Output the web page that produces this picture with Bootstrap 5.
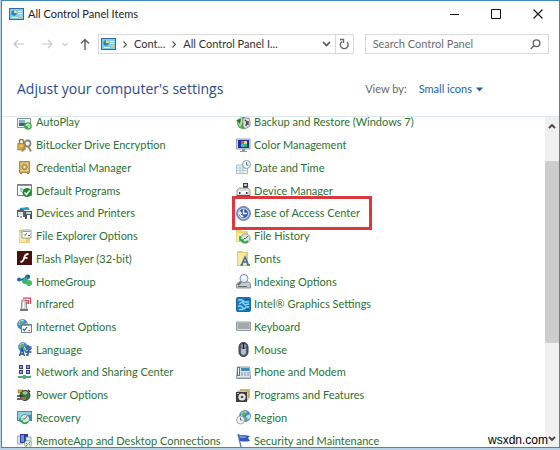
<!DOCTYPE html>
<html lang="en">
<head>
<meta charset="utf-8">
<meta name="viewport" content="width=device-width, initial-scale=1">
<title>All Control Panel Items</title>
<link href="https://cdn.jsdelivr.net/npm/bootstrap@5.3.0/dist/css/bootstrap.min.css" rel="stylesheet">
<style>
body{font-family:Lato,"Open Sans",sans-serif;font-size:11px;line-height:16px;color:#333;background:#b9d3e6}
svg{display:block;flex:none}
button{background:none;border:0;padding:0;color:inherit}
.desktop{height:100vh;padding:0 0 2px 1px}
.cp-window{border:1px solid #4389b5;background:#fff}
.title-bar{height:26px;padding:0 16px 0 7px;color:#222}
.caption-buttons{gap:32px;color:#111}
.nav-strip{height:20px;margin-top:7px;padding:0 10px 0 11px;color:#555}
.nav-arrows{width:85px;color:#c8c8c8}
.address{flex:1 1 0;border:1px solid #d9d9d9;color:#333;padding-left:2px}
.address .crumb-gap{margin:0 7px}
.address .split{border-left:1px solid #d9d9d9;width:18px}
.search{flex:none;width:34.4%;border:1px solid #d9d9d9;margin-left:11px;padding:0 7px}
.search input{font-size:11px;line-height:16px;color:#666}
.search input::placeholder{color:#6d6d6d;opacity:1}
.head{height:62px;padding:8px 76px 0 15px}
.head h1{font-family:"Open Sans","Noto Sans",sans-serif;font-size:14px;line-height:22px;color:#2b4b8c}
.view-label{color:#666}
.view-btn{color:#1f5fae;line-height:16px}
.content{border-top:1px solid #dbe8f2}
.items{margin:-6px 0 -5px;padding-left:15px}
.items ul{width:41.5%}
.items li{flex:1 1 0;min-height:0;display:flex;align-items:center}
.items a{display:flex;align-items:center;gap:4px;color:#2b7233;text-decoration:none;white-space:nowrap;position:relative}
.items ul+ul a{gap:3px}
.marked::after{content:"";position:absolute;inset:-9px -12px -9px -4px;border:3px solid #d93a40}
.scroll{width:14px;background:#f0f0f0;color:#444}
.thumb{flex:183 1 0;background:#cdcdcd}
.scroll button{height:17px}
.site-tag{position:absolute;right:12px;bottom:2px;font:12px/16px "Liberation Sans",Arial,sans-serif;color:#000}
</style>
<script src="https://cdn.jsdelivr.net/npm/bootstrap@5.3.0/dist/js/bootstrap.bundle.min.js"></script>
</head>
<body>
<svg width="0" height="0" class="position-absolute" aria-hidden="true"><defs>
<symbol id="panel" viewBox="0 0 15 12"><path fill="#2b6d9d" d="M0 0h15v12H0z"/><path fill="#83cdec" d="M1 1h13v10H1z"/><circle cx="5" cy="5" r="2.7" fill="#2687bd"/><path fill="#f7de79" d="M5 5V2.2A2.8 2.8 0 0 1 7.8 5z"/><path fill="#e8f8ff" d="M9 3h4v1H9zm0 2h4v1H9zM3 9h6v1H3z"/><path fill="#f1c74d" d="M10 7h3v2h-3z"/></symbol>
<symbol id="globe" viewBox="0 0 12 12"><circle cx="6" cy="6" r="5.5" fill="#418cc3" stroke="#3474a6" stroke-width=".6"/><path fill="#bde6f2" d="M2 3q3-3 6-1L5 5 2 7zM7 6l4-2v4L8 10z"/><path fill="#6cae58" d="M4 2l4 1-2 2-2 1-2-1zM6 7l3 1-2 3-2-2z"/></symbol>
</defs></svg>
<div class="desktop position-relative">
<main class="cp-window h-100 d-flex flex-column overflow-hidden">
<header class="title-bar d-flex align-items-center">
<svg width="15" height="12"><use href="#panel"/></svg><span class="ms-1 me-auto">All Control Panel Items</span>
<div class="caption-buttons d-flex align-items-center">
<button type="button" aria-label="Minimize"><svg width="9" height="9"><path d="M0 4.5h9" stroke="currentColor"/></svg></button>
<button type="button" aria-label="Maximize"><svg width="10" height="10"><path d="M.5.5h9v9h-9z" fill="none" stroke="currentColor"/></svg></button>
<button type="button" aria-label="Close"><svg width="10" height="10"><path d="M.5.5l9 9m0-9l-9 9" stroke="currentColor" stroke-width="1.1"/></svg></button>
</div>
</header>
<nav class="nav-strip d-flex">
<div class="nav-arrows d-flex align-items-center">
<button type="button" aria-label="Back"><svg width="12" height="10" fill="none" stroke="currentColor" stroke-width="1.2"><path d="M11 5H1m4-4L1 5l4 4"/></svg></button>
<button type="button" aria-label="Forward" class="ms-3"><svg width="12" height="10" fill="none" stroke="currentColor" stroke-width="1.2"><path d="M1 5h10M7 1l4 4-4 4"/></svg></button>
<button type="button" aria-label="Recent" class="ms-auto me-2"><svg width="6" height="5" fill="none" stroke="currentColor" stroke-width="1.2"><path d="M.5 1L3 3.500 5.500 1"/></svg></button>
<button type="button" aria-label="Up" class="ms-1 me-2"><svg width="10" height="12" fill="none" stroke="#666" stroke-width="1.5"><path d="M5 12V1.500M1 5.500l4-4 4 4"/></svg></button>
</div>
<div class="address d-flex align-items-center">
<svg width="15" height="12"><use href="#panel"/></svg>
<svg class="crumb-gap" width="4" height="7" fill="none" stroke="#555" stroke-width="1.2"><path d="M.5.5l3 3-3 3"/></svg>
<button type="button">Cont...</button>
<svg class="crumb-gap" width="4" height="7" fill="none" stroke="#555" stroke-width="1.2"><path d="M.5.5l3 3-3 3"/></svg>
<button type="button" class="text-nowrap">All Control Panel I...</button>
<button type="button" aria-label="Previous locations" class="ms-auto me-1"><svg width="9" height="6" fill="none" stroke="#555" stroke-width="1.7"><path d="M1 1l3.500 3.500L8 1"/></svg></button>
<button type="button" aria-label="Refresh" class="split h-100 d-flex align-items-center justify-content-center"><svg width="10" height="12" fill="none" stroke="#666" stroke-width="1.400"><path d="M3 3.500A3.900 3.900 0 1 0 8 4M1 1.500h3.500V5"/></svg></button>
</div>
<div class="search d-flex align-items-center">
<input type="text" class="border-0 p-0 flex-grow-1 w-100 bg-transparent" placeholder="Search Control Panel" aria-label="Search Control Panel">
<button type="button" aria-label="Search"><svg width="11" height="11" fill="none" stroke="#666" stroke-width="1.4"><circle cx="6.500" cy="4.200" r="3.300"/><path d="M4.200 6.500L.7 10"/></svg></button>
</div>
</nav>
<div class="head d-flex align-items-center">
<h1 class="m-0 me-auto text-nowrap fw-normal">Adjust your computer's settings</h1>
<span class="view-label me-2 pe-1 text-nowrap">View by:</span>
<button type="button" class="view-btn d-flex align-items-center text-nowrap">Small icons<svg class="ms-1" width="7" height="5"><path fill="#1f5fae" d="M0 .5h7L3.500 4.500z"/></svg></button>
</div>
<div class="content d-flex flex-grow-1 overflow-hidden">
<div class="items d-flex flex-grow-1">
<ul class="list-unstyled m-0 d-flex flex-column">
<li><a href="#"><svg width="15" height="15"><path fill="#eef2f1" stroke="#8b9793" d="M.5 3.500h13v9H.5z"/><path fill="#3a6679" d="M2 5h6v6H2z"/><path fill="#7fb7c6" d="M2 5h6v3H2z"/><circle cx="11" cy="11" r="3.800" fill="#39a84d"/><path fill="none" stroke="#e3ffe0" d="M9 11a2 2 0 1 1 2 2M11 9v3"/></svg>AutoPlay</a></li>
<li><a href="#"><svg width="15" height="15"><path fill="none" stroke="#a07b28" stroke-width="1.500" d="M2.500 6V3.500a2 2 0 0 1 4 0V6"/><path fill="#d6ab3e" stroke="#8f6b21" stroke-width=".6" d="M.7 5.500h7.500V12H.7z"/><circle cx="10.500" cy="5.500" r="3" fill="none" stroke="#8b8577" stroke-width="1.800"/><path stroke="#a58a5c" stroke-width="2" d="M9 7l-4 6.500M11 8l3 5.500"/><path stroke="#edd47e" d="M2 8h4"/></svg>BitLocker Drive Encryption</a></li>
<li><a href="#"><svg width="15" height="15"><path fill="#d3b36b" stroke="#a78d50" d="M2.500 1.500h10v11h-10z"/><path fill="#e8cd88" d="M4 3h7v8H4z"/><circle cx="7.500" cy="7" r="2.700" fill="#cfae63" stroke="#8f7233" stroke-width=".8"/><circle cx="7.500" cy="7" r="1" fill="#fff1b8"/><path fill="#8c7848" d="M3 13h2v1H3zm7 0h2v1h-2z"/></svg>Credential Manager</a></li>
<li><a href="#"><svg width="15" height="15"><path fill="#fff" stroke="#777f83" d="M.5 1.500h14v11H.5z"/><path fill="#8399a8" d="M1 2h13v1H1z"/><path stroke="#5090b8" d="M3 6h3M3 8h2"/><circle cx="10" cy="9.500" r="4.500" fill="#178a2d"/><path fill="none" stroke="#fff" stroke-width="1.600" d="M7.500 9.500l2 2 3.200-4"/></svg>Default Programs</a></li>
<li><a href="#"><svg width="15" height="15"><path fill="#3199c6" d="M3 2l8-1 2 3H3z"/><path fill="#59636c" d="M0 4l5-1 3 2v6H0z"/><path fill="#d8e2e6" d="M1 6h5v4H1z"/><path fill="#4c5861" d="M8 5h7v8H8z"/><path fill="#bdd4dd" d="M9 6h5v2H9z"/><path fill="#fff" d="M10 9h3v4h-3zM2 9h4v4H2z"/><path stroke="#444" d="M3 11h2"/></svg>Devices and Printers</a></li>
<li><a href="#"><svg width="15" height="15"><path fill="#ecd078" d="M2 1h4l1 1h6v12H2z"/><path fill="#f8e7a6" d="M3 4h6v9H3z"/><path fill="#fff" stroke="#7f8d92" stroke-width=".8" d="M5 1h9v8H5z"/><path stroke="#71a8ce" d="M6 2.500h7"/><path fill="none" stroke="#2d729d" d="M7 5.500l1 1 2-2.500M11 6.500h2"/></svg>File Explorer Options</a></li>
<li><a href="#"><svg width="15" height="15"><path fill="#48100f" d="M0 0h15v14H0z"/><path fill="none" stroke="#fff" stroke-width="1.800" d="M11.500 3Q8 3 7.300 6.500 6.500 10.500 3.500 11M7 6.800h3.500"/></svg>Flash Player (32-bit)</a></li>
<li><a href="#"><svg width="15" height="15"><path stroke="#4cae94" stroke-width="1.500" d="M2 6l7 1 2-5M9 7l3 4"/><circle cx="2" cy="5.500" r="2" fill="#2164ad"/><circle cx="10.500" cy="3" r="2.500" fill="#2c7bb3"/><circle cx="8" cy="7" r="3" fill="#36b188"/><circle cx="12" cy="9" r="3" fill="#4abc59"/><circle cx="11.700" cy="2" r="1" fill="#173d7b"/></svg>HomeGroup</a></li>
<li><a href="#"><svg width="15" height="15"><path fill="#d4d4d4" stroke="#73777a" stroke-width=".8" d="M5 3h4l1 10H4z"/><path fill="#777" d="M3 12h8v2H3z"/><path fill="#fff" d="M6 5h1v6H6z"/><path fill="none" stroke="#c74c5c" stroke-width="1.200" d="M6 1.200h7.500V7M8 3.500h3.500V7M9 5.500h1V7"/></svg>Infrared</a></li>
<li><a href="#"><svg width="15" height="15"><use href="#globe" width="11" height="11"/><path fill="#fff" stroke="#6f7f94" d="M4.500 5.500h10v8h-10z"/><path stroke="#92a5b8" d="M5 6.500h9"/><path fill="none" stroke="#245d9a" stroke-width="1.200" d="M6 10l1.500 1.500L10 8"/><path stroke="#aa8850" d="M11 11.500h2"/></svg>Internet Options</a></li>
<li><a href="#"><svg width="15" height="15"><use href="#globe" x="1" width="10" height="10"/><path fill="none" stroke="#1c4f9c" stroke-width="1.300" d="M2.500 14L5 7l2.500 7M3.500 12h3M8 5h6.500M11 3v2M9 7h4.500L11 9v4H9M8 10h6.500"/></svg>Language</a></li>
<li><a href="#"><svg width="15" height="15"><path fill="#353a83" d="M2 0h4v4H2zm7 0h4v4H9zM2 5h4v4H2zm7 0h4v4H9z"/><path fill="#8babe3" d="M3 1h2v2H3zm7 0h2v2h-2zM3 6h2v2H3zm7 0h2v2h-2z"/><path fill="#50aa84" d="M6 10h3v1h5v2H9v1H6v-1H1v-2h5z"/></svg>Network and Sharing Center</a></li>
<li><a href="#"><svg width="15" height="15"><path fill="#d4b645" stroke="#76662d" stroke-width=".6" d="M1 2h5v3H1z"/><circle cx="8" cy="7.500" r="5" fill="#3b7544" stroke="#363f32"/><path fill="#9bc687" d="M5 5q3-4 6 0L8 7z"/><path stroke="#333" stroke-width="1.500" d="M0 8h6M0 11h7M11 2l2 2"/><path fill="#9a7047" d="M4 9h5v3H4z"/></svg>Power Options</a></li>
<li><a href="#"><svg width="15" height="15"><path fill="#3c8dc0" d="M0 1h15v10H0z"/><path fill="#8fd1e6" d="M1 2h13v3Q7 4 5 10H1z"/><circle cx="8" cy="9" r="4.500" fill="#d9e9df" stroke="#6a8f87"/><path fill="none" stroke="#2fa653" stroke-width="1.600" d="M3 8v3h3M4 11Q7 15 11 12"/><path fill="none" stroke="#536f7c" d="M10 6L8 9H5.500"/></svg>Recovery</a></li>
<li><a href="#"><svg width="15" height="15"><path fill="#d9e5ee" stroke="#8095a5" stroke-width=".7" d="M.5 3h5v8h-5z"/><path fill="#263d98" d="M3 1h8v9H3z"/><path fill="#718bd5" d="M4 2h3v7H4z"/><path fill="#e1edf4" stroke="#7492a5" stroke-width=".7" d="M9 4h5v6H9z"/><circle cx="11" cy="11" r="3.600" fill="#edf2eb" stroke="#75967b" stroke-width=".7"/><path fill="none" stroke="#3b8e45" d="M9 10l1.500 1.500L9 13m4-4l-1.500 1.500L13 12"/></svg>RemoteApp and Desktop Connections</a></li>
</ul>
<ul class="list-unstyled m-0 d-flex flex-column">
<li><a href="#"><svg width="15" height="15"><circle cx="7" cy="8" r="6" fill="#54a856"/><path fill="#b6ddb0" d="M1 6l5-4 1 5-3 5z"/><path fill="#24752e" d="M0 5l5-1-1 5z"/><path fill="#dfdfdf" stroke="#6d6d6d" stroke-width=".7" d="M7 3h6l1 3v5l-5 3-2-3z"/><path fill="none" stroke="#555" stroke-width="1.500" d="M9 5l2 2-1 4m2-5v4"/></svg>Backup and Restore (Windows 7)</a></li>
<li><a href="#"><svg width="15" height="15"><path fill="#d6dde4" stroke="#8393a2" stroke-width=".8" d="M.5 1h13.500v10H.5z"/><path fill="#2330a6" d="M2 2h11v8H2z"/><path fill="#e44a59" d="M5 3h3v3H5z"/><path fill="#edda44" d="M8 3h3v3H8z"/><path fill="#37b35d" d="M8 6h3v3H8z"/><path fill="#37b8e5" d="M5 6h3v3H5z"/><path fill="#8d9aa5" d="M6 11h3v2h2v1H4v-1h2z"/></svg>Color Management</a></li>
<li><a href="#"><svg width="15" height="15"><path fill="#edf7fa" stroke="#93b3bf" stroke-width=".8" d="M.5 5h11v8.500H.5z"/><path stroke="#b1cad2" d="M1 8h10M1 10.500h10M4 6v7m3-7v7"/><circle cx="10.500" cy="4.500" r="4" fill="#f5fafb" stroke="#7f9faa"/><path fill="none" stroke="#557784" d="M10.500 2v3h2"/></svg>Date and Time</a></li>
<li><a href="#"><svg width="15" height="15"><path fill="#3e3e42" d="M7 0h5v7H7z"/><path fill="#c7c7c7" d="M8 1h3v2H8z"/><path fill="#ddd" stroke="#8c8c90" stroke-width=".8" d="M1 7l2-2h9l2 2v6.500H1z"/><path fill="#fff" d="M2 8h10v3H2z"/><path fill="#333" d="M3 9h1.500v2H3zm7 0h1.500v2H10z"/><path fill="#555" d="M1 12h13v1H1z"/></svg>Device Manager</a></li>
<li><a href="#" class="marked"><svg width="15" height="15"><circle cx="7.500" cy="7.500" r="7" fill="#7f99cf" stroke="#50649b" stroke-width=".7"/><circle cx="7.500" cy="7.500" r="5" fill="#3159ad" stroke="#dbe6f8"/><path fill="none" stroke="#fff" stroke-width="1.400" d="M7.500 3.500v4H11M4 7q0 3.500 3.500 3.500M3 8l1-2 1.500 2"/></svg>Ease of Access Center</a></li>
<li><a href="#"><svg width="15" height="15"><path fill="#eed66e" d="M0 1h5l1 1h6v11H0z"/><path fill="#f8ecae" d="M1 4h10v8H1z"/><circle cx="9.500" cy="9.500" r="4.700" fill="#d7e7d9" stroke="#78857c" stroke-width=".8"/><path fill="none" stroke="#31a24a" stroke-width="1.700" d="M4 7v4h4M5 11q3 4 7 1"/><path fill="none" stroke="#506055" d="M12 7L9.500 9.500H8"/></svg>File History</a></li>
<li><a href="#"><svg width="15" height="15"><path fill="#e9cb67" d="M1 0h5l1 1h5v14H1z"/><path fill="#f9e7a3" d="M2 2h8v12H2z"/><path fill="none" stroke="#2e6e96" stroke-width="1.500" d="M5.500 14L9 6l3.500 8M7 11h4M4.500 14h2.500m4 0h3"/></svg>Fonts</a></li>
<li><a href="#"><svg width="15" height="15"><path fill="#c7c9cb" stroke="#797d81" stroke-width=".8" d="M.5 10L3 8h10l1.500 2v4H.5z"/><path stroke="#66717a" d="M2 12.500h9"/><circle cx="8" cy="4.500" r="4" fill="#e5f2fc" stroke="#7b8da4"/><path stroke="#6c727b" stroke-width="2" d="M5 8l-3 3"/><path fill="#fff" d="M6 2h3v2H6z"/></svg>Indexing Options</a></li>
<li><a href="#"><svg width="15" height="15"><rect x=".5" y=".5" width="14" height="14" rx="1" fill="#1978bb" stroke="#20689e"/><path fill="none" stroke="#8bd9f3" stroke-width="1.300" d="M2 3h4l2 2h5M3 7l3-2 3 3 4-1M2 9h3l3 3 2-2h3M3 12.500h4"/><path fill="#174d87" d="M9 2h4v1H9zm1 10h3v1h-3z"/></svg>Intel® Graphics Settings</a></li>
<li><a href="#"><svg width="15" height="15"><path fill="#d8dce0" stroke="#7c848b" stroke-width=".8" d="M.5 3h14v8.500H.5z"/><path stroke="#6c747c" d="M1.500 5h12M1.500 7h12M1.500 9h12"/></svg>Keyboard</a></li>
<li><a href="#"><svg width="15" height="15"><rect x="3" y=".5" width="9" height="14" rx="4.500" fill="#555f70" stroke="#343c4a"/><path fill="#b4bfce" d="M5 6q2.500 2 5 0v5q-2.500 4-5 0z"/><path fill="#8f9bab" d="M5 3l2-1v4L5 5zm3-1l2 1v2L8 6z"/><path stroke="#1e2632" stroke-width="1.300" d="M7.500 1v6"/></svg>Mouse</a></li>
<li><a href="#"><svg width="15" height="15"><path fill="#dce8ef" stroke="#73838f" stroke-width=".8" d="M1.500 2h12l1 11.500H.5z"/><path fill="#65757f" d="M1 2h3v9H1z"/><path fill="#f8fbff" d="M2 3h1v7H2z"/><path fill="#448ab3" d="M5 3h8v3H5z"/><path stroke="#788e9a" stroke-dasharray="2 1" d="M5 8h8M5 10h8"/><path fill="#b7c5ce" d="M1 12h13v1H1z"/></svg>Phone and Modem</a></li>
<li><a href="#"><svg width="15" height="15"><path fill="#e2b273" d="M4 1h10v9H4z"/><path fill="#f3e7cf" stroke="#a38b6c" stroke-width=".7" d="M2 3h10v9H2z"/><path fill="#3d3d39" d="M0 4h11v10H0z"/><circle cx="6" cy="9" r="3.600" fill="#e4e7e4"/><circle cx="6" cy="9" r="1.300" fill="#485047"/><path stroke="#bbb" d="M1 5.500h2"/></svg>Programs and Features</a></li>
<li><a href="#"><svg width="15" height="15"><use href="#globe" x="3" width="12" height="12"/><circle cx="4.500" cy="10" r="4" fill="#edf2f2" stroke="#8a9a9f" stroke-width=".8"/><path fill="none" stroke="#587078" d="M4.500 7.500V10h2"/></svg>Region</a></li>
<li><a href="#"><svg width="15" height="15"><path stroke="#6775a7" stroke-width="1.300" d="M2 1l3 13"/><path fill="#3156b5" d="M2 1q3 2 6 1l6 1-2 2 2 3Q9 9 4 8z"/><path fill="#7397df" d="M3 2q3 2 5 1l3 1Q8 6 4 5z"/></svg>Security and Maintenance</a></li>
</ul>
</div>
<div class="scroll d-flex flex-column flex-shrink-0">
<button type="button" aria-label="Scroll up" class="d-flex align-items-center justify-content-center"><svg width="8" height="6" fill="none" stroke="currentColor" stroke-width="1.800"><path d="M1 5l3-3 3 3"/></svg></button>
<div style="flex:27 1 0"></div><div class="thumb"></div><div style="flex:87 1 0"></div>
<button type="button" aria-label="Scroll down" class="d-flex align-items-center justify-content-center"><svg width="8" height="6" fill="none" stroke="currentColor" stroke-width="1.800"><path d="M1 1l3 3 3-3"/></svg></button>
</div>
</div>
</main>
<span class="site-tag">wsxdn.com</span>
</div>
</body>
</html>
